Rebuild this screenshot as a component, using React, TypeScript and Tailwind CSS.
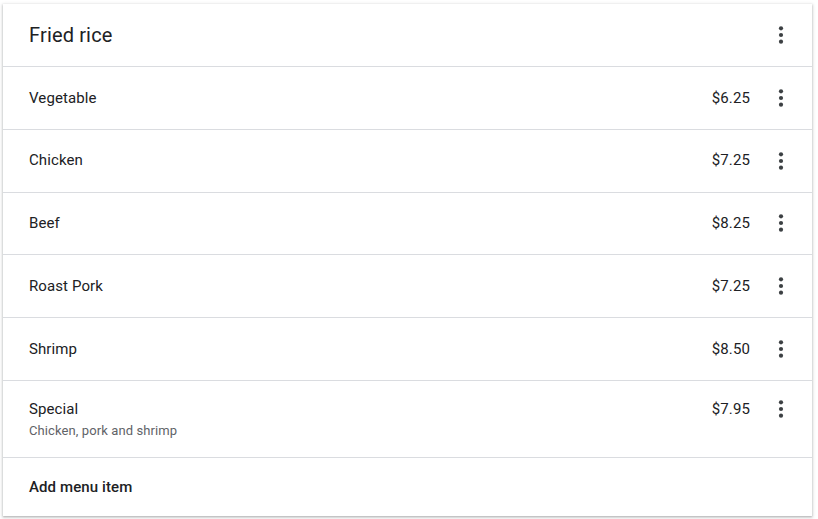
import React from "react"

const items = [
  { name: "Vegetable", price: "$6.25" },
  { name: "Chicken", price: "$7.25" },
  { name: "Beef", price: "$8.25" },
  { name: "Roast Pork", price: "$7.25" },
  { name: "Shrimp", price: "$8.50" },
]

const MoreVert = () => (
  <svg width="24" height="24" viewBox="0 0 24 24" className="fill-[#3c4043]">
    <circle cx="12" cy="5.3" r="2.1" />
    <circle cx="12" cy="12" r="2.1" />
    <circle cx="12" cy="18.7" r="2.1" />
  </svg>
)

const App = () => {
  return (
    <div className="h-[519px] w-[818px] bg-white pl-[3px] pt-[4px] font-['Roboto',sans-serif] text-[#202124]">
      <div className="flex h-[512px] w-[809px] flex-col bg-white shadow-[0_1px_2px_0_rgba(60,64,67,0.3),0_1px_3px_1px_rgba(60,64,67,0.15)]">
        {/* header */}
        <div className="flex h-[63px] shrink-0 items-center border-b border-[#dadce0] pl-[26px] pr-[19px]">
          <h2 className="flex-1 text-[20px] leading-none tracking-[0.15px]">Fried rice</h2>
          <MoreVert />
        </div>

        {items.map((item) => (
          <div
            key={item.name}
            className="flex h-[62.75px] shrink-0 items-center border-b border-[#dadce0] pl-[26px] pr-[19px]"
          >
            <span className="flex-1 text-[15px] tracking-[0.1px]">{item.name}</span>
            <span className="mr-[19px] text-[15px] tracking-[0.1px]">{item.price}</span>
            <MoreVert />
          </div>
        ))}

        <div className="flex h-[77px] shrink-0 items-start border-b border-[#dadce0] pl-[26px] pr-[19px] pt-[16px]">
          <div className="flex flex-1 flex-col pt-px">
            <span className="text-[15px] leading-[22px] tracking-[0.1px]">Special</span>
            <span className="text-[13px] leading-[22px] tracking-[0.1px] text-[#5f6368]">Chicken, pork and shrimp</span>
          </div>
          <span className="mr-[19px] pt-px text-[15px] leading-[22px] tracking-[0.1px]">$7.95</span>
          <MoreVert />
        </div>

        <div className="flex flex-1 items-center pl-[26px]">
          <span className="text-[15px] font-medium tracking-[0.1px]">Add menu item</span>
        </div>
      </div>
    </div>
  )
}

export default App
